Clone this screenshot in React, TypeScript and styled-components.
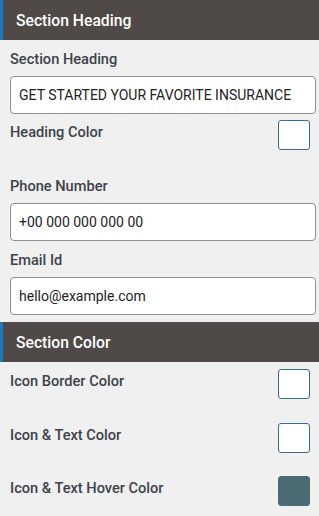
import styled, { createGlobalStyle } from "styled-components";

const GlobalStyle = createGlobalStyle`
  html, body {
    margin: 0;
    padding: 0;
    background: #f0f0f0;
    font-family: Roboto, "Liberation Sans", sans-serif;
  }
`;

const Panel = styled.div`
  width: 319px;
  background: #f0f0f0;
`;

const SectionHeader = styled.div`
  height: 40px;
  box-sizing: border-box;
  display: flex;
  align-items: center;
  padding-left: 13px;
  background: #4f4a48;
  border-left: 3px solid #1d79bf;
  color: #ffffff;
  font-size: 15.7px;
  font-weight: 500;
`;

const Body = styled.div<{ $top: number }>`
  padding: ${(p) => p.$top}px 5px 0 10px;
  display: flex;
  flex-direction: column;
`;

const Label = styled.label`
  display: block;
  font-size: 14.6px;
  font-weight: 500;
  line-height: 18px;
  color: #3c434a;
`;

const Field = styled.div<{ $gap?: number }>`
  display: flex;
  flex-direction: column;
  gap: 8px;
  margin-top: ${(p) => p.$gap ?? 0}px;
`;

const TextInput = styled.input`
  box-sizing: border-box;
  width: 306px;
  height: 38px;
  padding: 0 8px;
  border: 1px solid #8c8f94;
  border-radius: 4px;
  background: #ffffff;
  font-family: Roboto, "Liberation Sans", sans-serif;
  font-size: 14px;
  color: #1d2327;
  outline: none;
`;

const ColorRow = styled.div<{ $gap?: number }>`
  display: flex;
  justify-content: space-between;
  align-items: flex-start;
  margin-top: ${(p) => p.$gap ?? 0}px;
  padding-right: 4px;
  ${Label} {
    padding-top: 3px;
  }
`;

const Swatch = styled.div<{ $color: string; $filled?: boolean }>`
  box-sizing: border-box;
  width: 32px;
  height: 30px;
  border-radius: 3px;
  background: ${(p) => p.$color};
  border: 1px solid ${(p) => (p.$filled ? p.$color : "#3a6c91")};
`;

const Spacer = styled.div<{ $h: number }>`
  height: ${(p) => p.$h}px;
`;

export default function App() {
  return (
    <Panel>
      <GlobalStyle />
      <SectionHeader>Section Heading</SectionHeader>
      <Body $top={10}>
        <Field>
          <Label>Section Heading</Label>
          <TextInput defaultValue="GET STARTED YOUR FAVORITE INSURANCE" />
        </Field>
        <ColorRow $gap={6}>
          <Label>Heading Color</Label>
          <Swatch $color="#ffffff" />
        </ColorRow>
        <Field $gap={27}>
          <Label>Phone Number</Label>
          <TextInput defaultValue="+00 000 000 000 00" />
        </Field>
        <Field $gap={10}>
          <Label>Email Id</Label>
          <TextInput defaultValue="hello@example.com" />
        </Field>
      </Body>
      <Spacer $h={7} />
      <SectionHeader>Section Color</SectionHeader>
      <Body $top={7}>
        <ColorRow>
          <Label>Icon Border Color</Label>
          <Swatch $color="#ffffff" />
        </ColorRow>
        <ColorRow $gap={24}>
          <Label>Icon &amp; Text Color</Label>
          <Swatch $color="#ffffff" />
        </ColorRow>
        <ColorRow $gap={23}>
          <Label>Icon &amp; Text Hover Color</Label>
          <Swatch $color="#4a6b72" $filled />
        </ColorRow>
      </Body>
    </Panel>
  );
}
